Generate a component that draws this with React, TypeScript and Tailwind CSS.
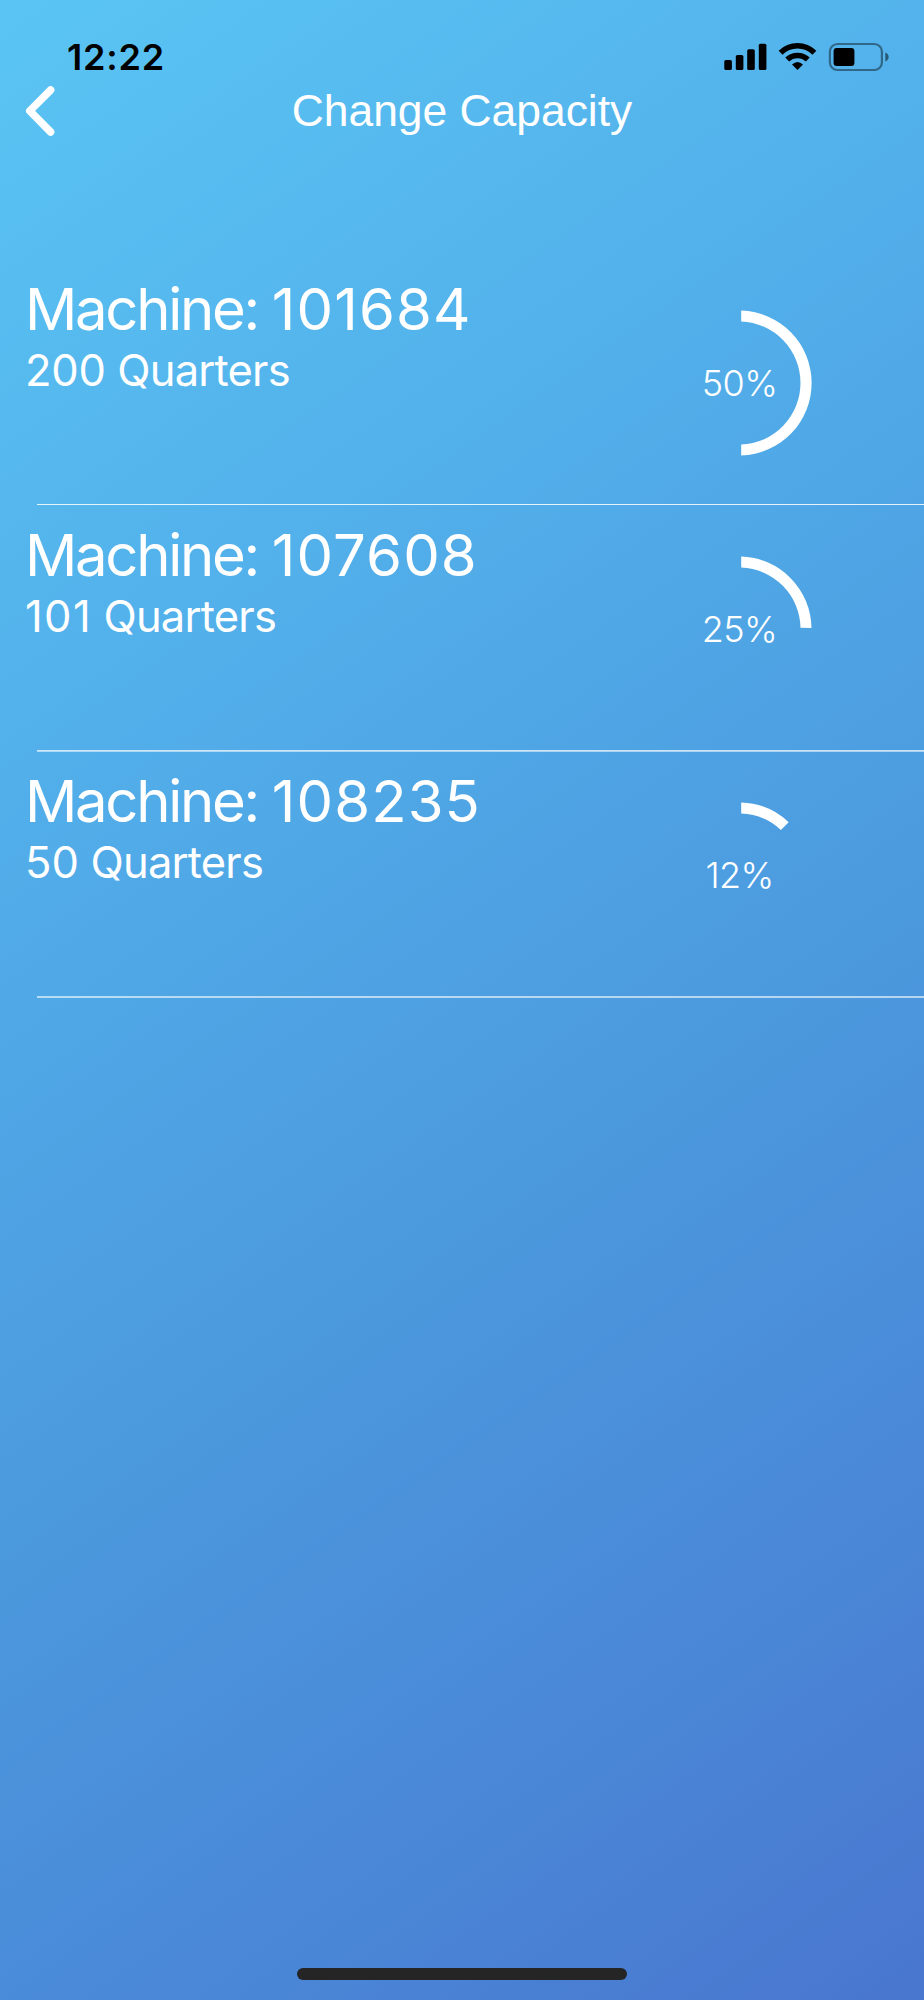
type Machine = {
  id: string;
  quarters: number;
  spacing: string;
  divider: string;
};

const CAPACITY = 400;

const machines: Machine[] = [
  { id: "101684", quarters: 200, spacing: "tracking-[-0.2px]", divider: "top-[246px] h-px bg-white/85" },
  { id: "107608", quarters: 101, spacing: "tracking-[1.4px]", divider: "top-[246px] h-[2px] bg-linear-to-b from-white/80 to-white/45" },
  { id: "108235", quarters: 50, spacing: "tracking-[0.1px]", divider: "top-[246px] h-[2px] bg-white/60" },
];

function slicePath(fraction: number): string {
  const outer = 72.5;
  const inner = 61.5;
  const gap = 2.2;
  const sweep = fraction * Math.PI * 2;
  const at = (r: number, angle: number) =>
    `${(80 + r * Math.sin(angle)).toFixed(2)} ${(80 - r * Math.cos(angle)).toFixed(2)}`;
  const o = Math.asin(gap / outer);
  const i = Math.asin(gap / inner);
  return `M${at(outer, o)}A${outer} ${outer} 0 0 1 ${at(outer, sweep - o)}L${at(inner, sweep - i)}A${inner} ${inner} 0 0 0 ${at(inner, i)}Z`;
}

function Donut({ fraction }: { fraction: number }) {
  return (
    <div className="mt-[45px] mr-[105px] grid size-[160px] shrink-0 place-items-center">
      <svg viewBox="0 0 160 160" className="col-start-1 row-start-1 size-[160px]">
        <path d={slicePath(fraction)} fill="white" />
      </svg>
      <span className="col-start-1 row-start-1 pl-[1px] text-[36px] leading-[44px] font-[350] tracking-[-0.6px]">
        {Math.floor(fraction * 100)}%
      </span>
    </div>
  );
}

function StatusBar() {
  return (
    <div className="flex h-[84px] items-start justify-between pr-[34px] pl-[67px] text-black">
      <span className="mt-[35px] text-[36px] leading-[44px] font-[560] tracking-[0.8px]">12:22</span>
      <svg viewBox="720 40 170 34" className="mt-[40px] h-[34px] w-[170px]">
        <rect x="724.3" y="60" width="7.6" height="10" rx="1.6" />
        <rect x="735.8" y="55" width="7.6" height="15" rx="1.6" />
        <rect x="747.2" y="49.3" width="7.6" height="20.7" rx="1.6" />
        <rect x="758.8" y="43.7" width="7.6" height="26.3" rx="1.6" />
        <g fill="none" stroke="black" strokeWidth="5.6">
          <path d="M780.6 52.7A24.2 24.2 0 0 1 814.4 52.7" />
          <path d="M787.2 59.6A14.8 14.8 0 0 1 807.8 59.6" />
        </g>
        <path d="M797.5 70L792 64.4Q797.5 59.4 803 64.4Z" />
        <rect x="829.9" y="44" width="52" height="26" rx="7.5" fill="none" stroke="black" strokeOpacity="0.42" strokeWidth="2.2" />
        <rect x="833.6" y="48" width="20.8" height="18" rx="3" />
        <path d="M885.3 52.4Q888.6 53.6 888.6 57Q888.6 60.4 885.3 61.6Z" fillOpacity="0.5" />
      </svg>
    </div>
  );
}

export default function App() {
  return (
    <div className="flex h-[2000px] w-[924px] flex-col overflow-hidden bg-[linear-gradient(145deg,#5ac5f4_0%,#52afea_30%,#4b98dd_60%,#4a87d7_81%,#4976cf_100%)] font-['Inter',sans-serif] text-white">
      <StatusBar />
      <header className="grid h-[54px] grid-cols-[80px_1fr_80px] items-center">
        <svg viewBox="0 0 80 54" className="h-[54px] w-[80px]" fill="none" stroke="white" strokeWidth="7.6" strokeLinecap="round" strokeLinejoin="round">
          <path d="M50.6 6L29.8 26.9L50.6 48" />
        </svg>
        <h1 className="text-center font-['Liberation_Sans',sans-serif] text-[44.4px] leading-[50px] font-normal">
          Change Capacity
        </h1>
      </header>
      <ul className="mt-[120px]">
        {machines.map((m) => (
          <li key={m.id} className="relative flex h-[246px] items-start justify-between pl-[25px]">
            <div>
              <div className="mt-[16px] text-[58px] leading-[70px] tracking-[-2.3px] whitespace-nowrap">
                Machine: <span className="tracking-[1.1px]">{m.id}</span>
              </div>
              <div className="text-[43.5px] leading-[52px] tracking-[-0.8px]">
                <span className={m.spacing}>{m.quarters}</span> Quarters
              </div>
            </div>
            <Donut fraction={m.quarters / CAPACITY} />
            <div className={`absolute right-0 left-[37px] ${m.divider}`} />
          </li>
        ))}
      </ul>
      <div className="mx-auto mt-auto mb-[20px] h-[12px] w-[330px] rounded-full bg-[#252525]" />
    </div>
  );
}
